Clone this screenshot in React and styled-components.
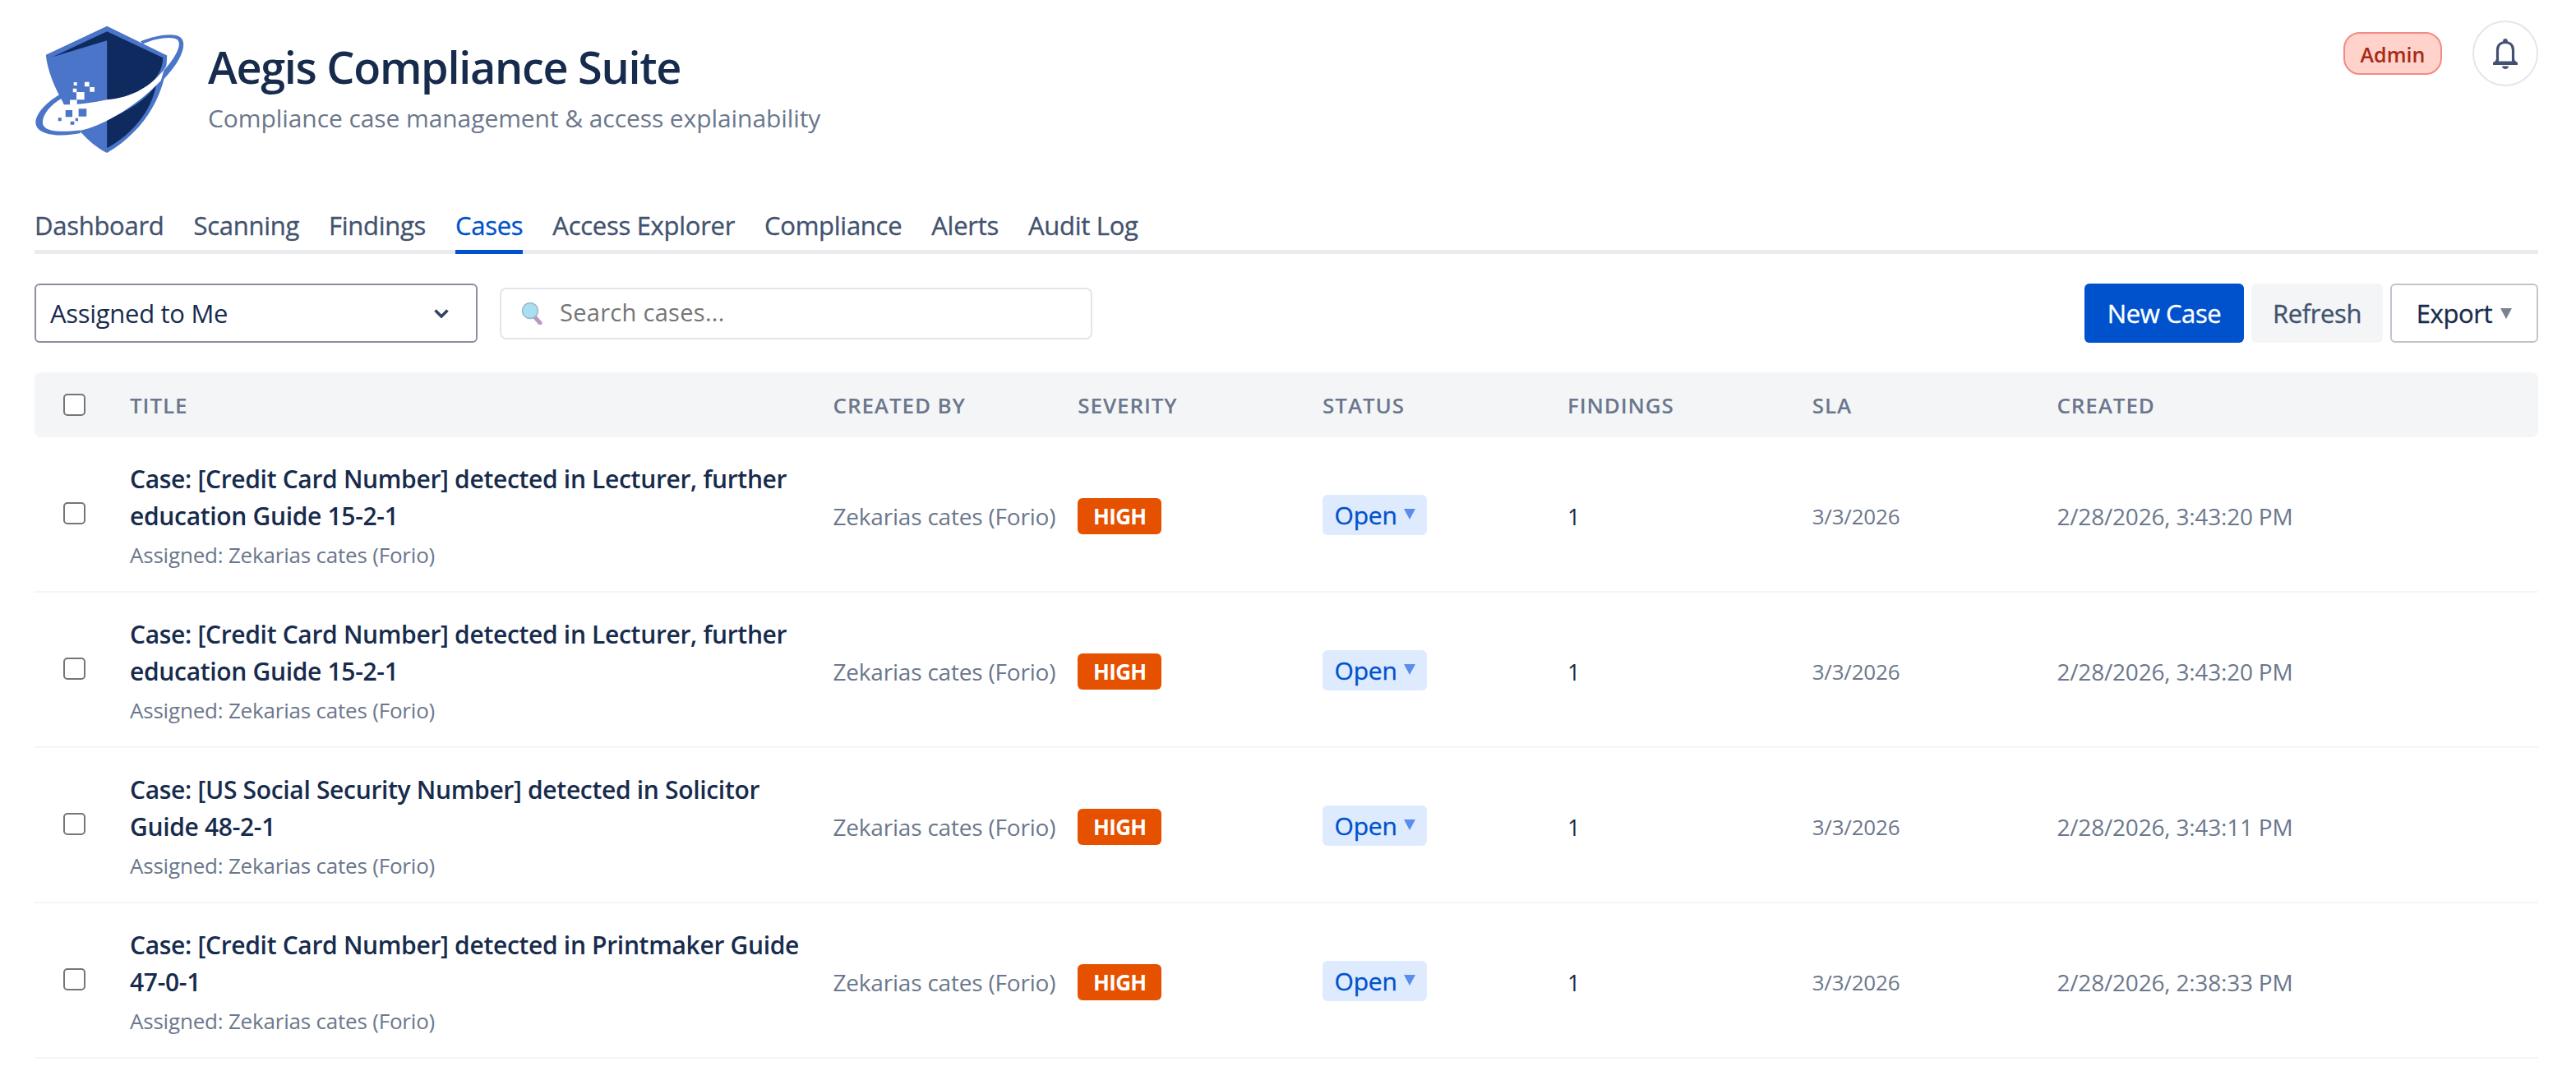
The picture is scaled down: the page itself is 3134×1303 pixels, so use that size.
import React from "react";
import styled, { createGlobalStyle } from "styled-components";

const TABS = ["Dashboard", "Scanning", "Findings", "Cases", "Access Explorer", "Compliance", "Alerts", "Audit Log"];

const COLUMNS = ["Title", "Created By", "Severity", "Status", "Findings", "SLA", "Created"];

const CASES = [
  { title: "Case: [Credit Card Number] detected in Lecturer, further education Guide 15-2-1", created: "2/28/2026, 3:43:20 PM" },
  { title: "Case: [Credit Card Number] detected in Lecturer, further education Guide 15-2-1", created: "2/28/2026, 3:43:20 PM" },
  { title: "Case: [US Social Security Number] detected in Solicitor Guide 48-2-1", created: "2/28/2026, 3:43:11 PM" },
  { title: "Case: [Credit Card Number] detected in Printmaker Guide 47-0-1", created: "2/28/2026, 2:38:33 PM" },
];

function Logo() {
  return (
    <LogoSvg viewBox="70 60 550 470">
      <path fill="#4a75c8" d="M332 62L552 170C550 300 480 440 332 527C260 490 200 420 170 340C140 290 112 220 108 168Z" />
      <path fill="#0f2a5f" d="M132 175L332 82L537 178C536 260 450 325 332 332V115Z" />
      <path fill="#0f2a5f" d="M332 402C410 375 470 335 512 280C495 370 430 455 332 510Z" />
      <path fill="#fff" d="M556 200C500 285 420 325 332 332C280 345 200 352 165 350L160 318C110 355 85 400 105 432C120 450 180 452 235 445C300 432 420 375 530 262Z" />
      <path fill="#4a75c8" d="M160 312C95 350 60 400 73 428C85 458 150 472 235 455L233 444C160 452 112 448 100 428C85 405 115 355 168 326Z" />
      <path fill="#4a75c8" d="M455 118C515 95 580 85 603 105C628 130 600 190 555 240L528 270L540 225C585 175 608 130 590 112C570 98 510 106 462 128Z" />
      <path fill="#fff" d="M210 268h12v12h-12zM250 267h17v17h-17zM269 286h17v17h-17zM207 291h14v14h-14zM220 304h29v28h-29zM196 333h26v24h-26z" />
      <path fill="#4a75c8" d="M180 370h25v25h-25zM228 365h29v29h-29zM153 398h12v12h-12zM198 412h14v12h-14zM216 400h10v10h-10z" />
    </LogoSvg>
  );
}

function BellIcon() {
  return (
    <svg width="32" height="37" viewBox="0 0 32 37">
      <circle cx="16" cy="2.800" r="2.800" fill="#42526e" />
      <path fill="none" stroke="#42526e" strokeWidth="3.200" d="M6.500 27V14C6.500 8 10.500 4.500 16 4.500S25.500 8 25.500 14V27" />
      <path fill="#42526e" d="M5 24.500C5 27 3 28 1 29V32H31V29C29 28 27 27 27 24.500L24 27.500H8Z" />
      <path fill="#42526e" d="M12 33.500H20C20 35.500 18 37 16 37S12 35.500 12 33.500Z" />
    </svg>
  );
}

function SearchGlyph() {
  return (
    <svg width="28" height="28" viewBox="0 0 28 28">
      <path d="M17 19L23 26" stroke="#b79ac4" strokeWidth="5" strokeLinecap="round" />
      <circle cx="11" cy="11" r="9.500" fill="#a9dff0" stroke="#9db4c6" strokeWidth="1.500" />
    </svg>
  );
}

function Chevron() {
  return (
    <svg width="20" height="13" viewBox="0 0 20 13">
      <path d="M2.500 2.500L10 10L17.500 2.500" fill="none" stroke="#344563" strokeWidth="3.600" />
    </svg>
  );
}

export default function App() {
  return (
    <Page>
      <GlobalStyle />
      <Header>
        <Brand>
          <Logo />
          <BrandText>
            <Title>Aegis Compliance Suite</Title>
            <Subtitle>Compliance case management &amp; access explainability</Subtitle>
          </BrandText>
        </Brand>
        <HeaderActions>
          <RolePill>Admin</RolePill>
          <BellButton>
            <BellIcon />
          </BellButton>
        </HeaderActions>
      </Header>

      <Tabs>
        {TABS.map((tab) => (
          <Tab key={tab} $active={tab === "Cases"}>
            {tab}
          </Tab>
        ))}
      </Tabs>

      <Toolbar>
        <Filter>
          Assigned to Me
          <Chevron />
        </Filter>
        <SearchBox>
          <SearchGlyph />
          <SearchInput placeholder="Search cases..." />
        </SearchBox>
        <ToolbarActions>
          <Button $kind="primary">New Case</Button>
          <Button $kind="subtle">Refresh</Button>
          <Button $kind="outline">
            Export
            <Caret $color="#7a8194" $top={28} />
          </Button>
        </ToolbarActions>
      </Toolbar>

      <Table>
        <HeadRow>
          <CheckCell>
            <Check type="checkbox" />
          </CheckCell>
          {COLUMNS.map((col) => (
            <HeadCell key={col}>{col}</HeadCell>
          ))}
        </HeadRow>
        {CASES.map((item, i) => (
          <Row key={i}>
            <RowCheckCell>
              <Check type="checkbox" />
            </RowCheckCell>
            <div>
              <CaseTitle>{item.title}</CaseTitle>
              <Assigned>Assigned: Zekarias cates (Forio)</Assigned>
            </div>
            <MutedCell>Zekarias cates (Forio)</MutedCell>
            <div>
              <Severity>HIGH</Severity>
            </div>
            <div>
              <Status>
                Open
                <Caret $color="#5b8dea" $top={17} />
              </Status>
            </div>
            <CountCell>1</CountCell>
            <SlaCell>3/3/2026</SlaCell>
            <MutedCell>{item.created}</MutedCell>
          </Row>
        ))}
      </Table>
    </Page>
  );
}

const GlobalStyle = createGlobalStyle`
  body {
    margin: 0;
    background: #fff;
    font-family: "Open Sans", "Liberation Sans", sans-serif;
    color: #172b4d;
  }
`;

const Page = styled.div`
  padding: 25px 46px 0 42px;
`;

const Header = styled.header`
  display: flex;
  justify-content: space-between;
  align-items: flex-start;
  height: 215px;
`;

const Brand = styled.div`
  display: flex;
  align-items: center;
  gap: 27px;
  margin: 6px 0 0 1px;
`;

const BrandText = styled.div`
  margin-bottom: 6px;
`;

const LogoSvg = styled.svg`
  width: 183px;
  height: 156px;
`;

const Title = styled.h1`
  margin: 0 0 10px;
  font-size: 54px;
  line-height: 66px;
  font-weight: 600;
  letter-spacing: -1.3px;
  color: #172b4d;
`;

const Subtitle = styled.p`
  margin: 0;
  font-size: 30px;
  line-height: 40px;
  letter-spacing: -0.08px;
  color: #6b778c;
`;

const HeaderActions = styled.div`
  display: flex;
  align-items: center;
  gap: 37px;
`;

const RolePill = styled.span`
  display: flex;
  align-items: center;
  justify-content: center;
  width: 120px;
  height: 52px;
  box-sizing: border-box;
  padding-top: 2px;
  border: 2px solid #f28b82;
  border-radius: 20px;
  background: #ffd2cc;
  color: #a82a14;
  font-size: 25px;
  font-weight: 600;
`;

const BellButton = styled.button`
  display: flex;
  align-items: center;
  justify-content: center;
  width: 80px;
  height: 80px;
  padding: 0;
  border: 2px solid #e4e6ea;
  border-radius: 50%;
  background: #fff;
`;

const Tabs = styled.nav`
  display: flex;
  gap: 36px;
  height: 69px;
  box-sizing: border-box;
  border-bottom: 5px solid #e9ebee;
`;

const Tab = styled.a`
  display: flex;
  align-items: center;
  height: 69px;
  box-sizing: border-box;
  padding-top: 4px;
  border-bottom: 5px solid ${(p) => (p.$active ? "#0052cc" : "transparent")};
  font-size: 31px;
  -webkit-text-stroke: 0.35px currentColor;
  letter-spacing: -0.28px;
  color: ${(p) => (p.$active ? "#0052cc" : "#42526e")};
`;

const Toolbar = styled.div`
  display: flex;
  align-items: center;
  gap: 27px;
  margin-top: 36px;
`;

const Filter = styled.button`
  display: flex;
  align-items: center;
  justify-content: space-between;
  width: 539px;
  height: 72px;
  box-sizing: border-box;
  padding: 0 32px 0 17px;
  border: 2px solid #8b8f9e;
  border-radius: 6px;
  background: #fff;
  font-family: inherit;
  font-size: 31px;
  letter-spacing: -0.3px;
  color: #172b4d;
`;

const SearchBox = styled.label`
  display: flex;
  align-items: center;
  gap: 19px;
  width: 721px;
  height: 63px;
  box-sizing: border-box;
  padding: 0 24px;
  border: 2px solid #e3e5e8;
  border-radius: 8px;
`;

const SearchInput = styled.input`
  flex: 1;
  min-width: 0;
  border: 0;
  outline: 0;
  padding: 0 0 3px;
  font-family: inherit;
  font-size: 29px;
  letter-spacing: 0.3px;
  &::placeholder {
    color: #757575;
  }
`;

const ToolbarActions = styled.div`
  display: flex;
  gap: 9px;
  margin-left: auto;
`;

const BUTTON_KINDS = {
  primary: "background: #0052cc; color: #fff; border: 0; width: 194px;",
  subtle: "background: #f4f5f7; color: #42526e; border: 0; width: 160px;",
  outline: "background: #fff; color: #172b4d; border: 2px solid #c1c4cc; width: 180px;",
};

const Button = styled.button`
  display: inline-flex;
  align-items: center;
  justify-content: center;
  gap: 10px;
  height: 72px;
  box-sizing: border-box;
  padding: 0;
  border-radius: 6px;
  font-family: inherit;
  font-size: 31px;
  -webkit-text-stroke: 0.35px currentColor;
  letter-spacing: -0.4px;
  ${(p) => BUTTON_KINDS[p.$kind]}
`;

const Caret = styled.span`
  align-self: flex-start;
  width: 0;
  height: 0;
  margin-top: ${(p) => p.$top}px;
  border-style: solid;
  border-width: 13px 7.5px 0;
  border-color: ${(p) => p.$color} transparent transparent;
`;

const Table = styled.div`
  margin-top: 36px;
`;

const grid = `
  display: grid;
  grid-template-columns: 116px 855.5px repeat(5, 297.8px) 1fr;
  align-items: center;
`;

const HeadRow = styled.div`
  ${grid}
  height: 79px;
  background: #f4f5f7;
  border-radius: 8px;
`;

const HeadCell = styled.div`
  font-size: 26px;
  font-weight: 600;
  letter-spacing: 0.9px;
  text-transform: uppercase;
  color: #6b778c;
`;

const Row = styled.div`
  ${grid}
  height: 189px;
  box-sizing: border-box;
  border-bottom: 2px solid #f4f5f7;
`;

const CheckCell = styled.div`
  display: flex;
  padding-left: 35px;
`;

const RowCheckCell = styled(CheckCell)`
  margin-top: -2px;
`;

const Check = styled.input`
  appearance: none;
  width: 27px;
  height: 27px;
  margin: 0;
  border: 2px solid #767676;
  border-radius: 5px;
  background: #fff;
`;

const CaseTitle = styled.div`
  max-width: 830px;
  font-size: 30px;
  line-height: 45px;
  font-weight: 600;
  letter-spacing: -0.32px;
  color: #172b4d;
`;

const Assigned = styled.div`
  margin-top: 8px;
  font-size: 26px;
  line-height: 34px;
  letter-spacing: -0.2px;
  color: #6b778c;
`;

const MutedCell = styled.div`
  margin-top: 5px;
  font-size: 28px;
  letter-spacing: -0.2px;
  color: #6b778c;
`;

const Severity = styled.span`
  display: flex;
  align-items: center;
  justify-content: center;
  width: 102px;
  height: 44px;
  margin-top: 4px;
  border-radius: 6px;
  background: #e65100;
  color: #fff;
  font-size: 26px;
  font-weight: 700;
  letter-spacing: -0.7px;
`;

const Status = styled.span`
  display: flex;
  align-items: center;
  justify-content: center;
  gap: 8px;
  width: 127px;
  height: 49px;
  margin-top: 2px;
  border-radius: 6px;
  background: #deebff;
  color: #0052cc;
  font-size: 30px;
  -webkit-text-stroke: 0.35px currentColor;
  letter-spacing: -0.2px;
`;

const CountCell = styled.div`
  margin-top: 5px;
  font-size: 27px;
  color: #172b4d;
`;

const SlaCell = styled.div`
  margin-top: 5px;
  font-size: 26px;
  letter-spacing: -0.2px;
  color: #6b778c;
`;
